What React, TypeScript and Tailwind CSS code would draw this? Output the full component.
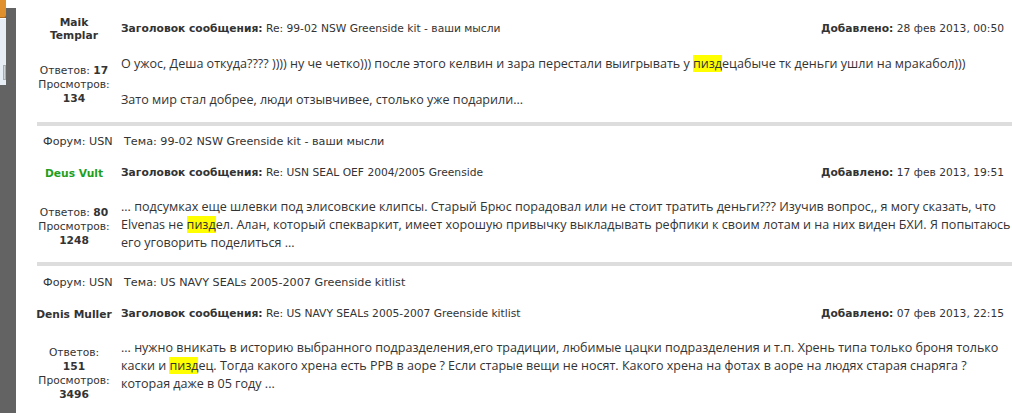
import React from "react";

const small = "font-['DejaVu_Sans','Liberation_Sans',sans-serif] text-[10.7px] text-[#333333]";
const body = "font-['Open_Sans','Liberation_Sans',sans-serif] text-[12.55px] leading-[18px] text-[#333333]";

const Hl = ({ children }: { children: React.ReactNode }) => (
  <span className="bg-[#ffff00]">{children}</span>
);

type PostProps = {
  forum?: string;
  topic?: string;
  author: React.ReactNode;
  authorClass?: string;
  subject: string;
  date: string;
  stats: React.ReactNode;
  children: React.ReactNode;
  top: string;
  headGap: string;
  rowGap: string;
  bodyPad?: string;
  statsPad?: string;
};

const Post = ({ forum, topic, author, authorClass, subject, date, stats, children, top, headGap, rowGap, bodyPad, statsPad }: PostProps) => (
  <div className={top}>
    {forum && (
      <div className="flex font-['DejaVu_Sans','Liberation_Sans',sans-serif] text-[11.2px] leading-[14px] text-[#333333] pl-[6px]">
        <span className="w-[81px] shrink-0 whitespace-nowrap">Форум: {forum}</span>
        <span className="whitespace-nowrap">Тема: {topic}</span>
      </div>
    )}
    <div className={`flex items-center ${headGap}`}>
      <div className={`w-[74px] shrink-0 flex flex-col items-center whitespace-nowrap font-bold text-[10.7px] leading-[13px] font-['DejaVu_Sans','Liberation_Sans',sans-serif] ${authorClass ?? "text-[#333333]"}`}>
        {author}
      </div>
      <div className={`ml-[10px] min-w-0 flex-1 flex justify-between pr-[8px] leading-[14px] whitespace-nowrap ${small}`}>
        <span>
          <b>Заголовок сообщения:</b> {subject}
        </span>
        <span>
          <b>Добавлено:</b> {date}
        </span>
      </div>
    </div>
    <div className={`flex items-center ${rowGap}`}>
      <div className={`w-[74px] shrink-0 flex flex-col items-center whitespace-nowrap leading-[14px] ${small} ${statsPad ?? ""}`}>{stats}</div>
      <div className={`ml-[10px] min-w-0 whitespace-nowrap ${body} ${bodyPad ?? ""}`}>{children}</div>
    </div>
  </div>
);

const Sep = ({ className }: { className: string }) => <div className={`h-[4px] bg-[#dddddd] ${className}`} />;

export default function App() {
  return (
    <div className="relative flex h-[413px] w-[1012px] overflow-hidden bg-white">
      {/* window edge on the left */}
      <div className="w-[16px] shrink-0 flex flex-col">
        <div className="h-[8px]" />
        <div className="flex-1 bg-[#636363]" />
      </div>
      <div className="absolute left-0 top-0 w-[6px] h-[86px]">
        <div className="h-[18px] bg-[#e0902c] rounded-br-[3px] border-b border-[#b06a20]" />
        <div className="h-[67px] bg-[#e6edf5] border-t border-white relative">
          <div className="absolute left-[3px] top-[46px] w-[3px] h-[15px] bg-[#cfd3d8] border border-[#a8acb0]" />
        </div>
      </div>

      <div className="flex-1 min-w-0 pl-[21px]">
        <Post
          top="pt-[16px]"
          headGap=""
          rowGap="mt-[13px]"
          statsPad="pt-[5px]"
          author={<><span>Maik</span><span>Templar</span></>}
          subject="Re: 99-02 NSW Greenside kit - ваши мысли"
          date="28 фев 2013, 00:50"
          stats={
            <>
              <div>Ответов: <b>17</b></div>
              <div>Просмотров:</div>
              <div className="font-bold">134</div>
            </>
          }
        >
          <div>О ужос, Деша откуда???? )))) ну че четко))) после этого келвин и зара перестали выигрывать у <Hl>пизд</Hl>ецабыче тк деньги ушли на мракабол)))</div>
          <div>&nbsp;</div>
          <div>Зато мир стал добрее, люди отзывчивее, столько уже подарили...</div>
        </Post>
        <Sep className="mt-[13px]" />

        <Post
          top="pt-[9px]"
          headGap="mt-[17px]"
          rowGap="mt-[18px]"
          statsPad="pt-[4px]"
          forum="USN"
          topic="99-02 NSW Greenside kit - ваши мысли"
          author="Deus Vult"
          authorClass="text-[#1f9f1f]"
          subject="Re: USN SEAL OEF 2004/2005 Greenside"
          date="17 фев 2013, 19:51"
          stats={
            <>
              <div>Ответов: <b>80</b></div>
              <div>Просмотров:</div>
              <div className="font-bold">1248</div>
            </>
          }
        >
          <div>... подсумках еще шлевки под элисовские клипсы. Старый Брюс порадовал или не стоит тратить деньги??? Изучив вопрос,, я могу сказать, что</div>
          <div>Elvenas не <Hl>пизд</Hl>ел. Алан, который спекваркит, имеет хорошую привычку выкладывать рефпики к своим лотам и на них виден БХИ. Я попытаюсь</div>
          <div>его уговорить поделиться ...</div>
        </Post>
        <Sep className="mt-[10px]" />

        <Post
          top="pt-[10px]"
          headGap="mt-[17px]"
          rowGap="mt-[18px]"
          bodyPad="pb-[15px]"
          forum="USN"
          topic="US NAVY SEALs 2005-2007 Greenside kitlist"
          author="Denis Muller"
          subject="Re: US NAVY SEALs 2005-2007 Greenside kitlist"
          date="07 фев 2013, 22:15"
          stats={
            <>
              <div>Ответов:</div>
              <div className="font-bold">151</div>
              <div>Просмотров:</div>
              <div className="font-bold">3496</div>
            </>
          }
        >
          <div>... нужно вникать в историю выбранного подразделения,его традиции, любимые цацки подразделения и т.п. Хрень типа только броня только</div>
          <div>каски и <Hl>пизд</Hl>ец. Тогда какого хрена есть PPB в аоре ? Если старые вещи не носят. Какого хрена на фотах в аоре на людях старая снаряга ?</div>
          <div>которая даже в 05 году ...</div>
        </Post>
      </div>
    </div>
  );
}
